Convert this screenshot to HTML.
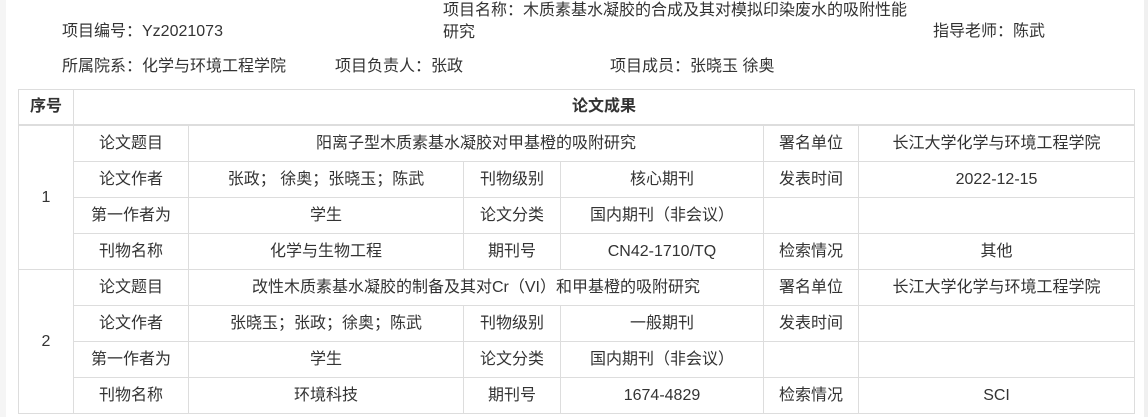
<!DOCTYPE html>
<html><head><meta charset="utf-8"><style>
html,body{margin:0;width:1148px;height:417px;overflow:hidden}
body{background:#fff;font-family:"Liberation Sans","Noto Sans CJK SC",sans-serif;font-size:16px;color:#333;position:relative}
.strip{position:absolute;left:0;top:0;width:6px;height:417px;background:#f5f5f5}
.rs{position:absolute;left:1144px;top:0;width:4px;height:417px;background:#f0f0f0}
.t{position:absolute;white-space:nowrap;line-height:22px}
table{position:absolute;left:18px;top:89px;border-collapse:collapse;table-layout:fixed;width:1116px}
td{border:1px solid #ddd;text-align:center;height:35px;padding:0;line-height:20px;white-space:nowrap}
tr.h td{height:34px;font-weight:bold;font-size:16px;border-bottom:2px solid #ddd}
</style></head><body>
<div class="strip"></div><div class="rs"></div>
<div class="t" style="left:62px;top:21px">项目编号：Yz2021073</div>
<div class="t" style="left:443px;top:0px">项目名称：木质素基水凝胶的合成及其对模拟印染废水的吸附性能<br>研究</div>
<div class="t" style="left:933px;top:21px">指导老师：陈武</div>
<div class="t" style="left:62px;top:56px">所属院系：化学与环境工程学院</div>
<div class="t" style="left:335px;top:56px">项目负责人：张政</div>
<div class="t" style="left:610px;top:56px">项目成员：张晓玉 徐奥</div>
<table>
<colgroup><col style="width:55px"><col style="width:115px"><col style="width:275px"><col style="width:97px"><col style="width:203px"><col style="width:95px"><col style="width:276px"></colgroup>
<tr class="h"><td>序号</td><td colspan="6">论文成果</td></tr>
<tr><td rowspan="4">1</td><td>论文题目</td><td colspan="3">阳离子型木质素基水凝胶对甲基橙的吸附研究</td><td>署名单位</td><td>长江大学化学与环境工程学院</td></tr>
<tr><td>论文作者</td><td>张政； 徐奥；张晓玉；陈武</td><td>刊物级别</td><td>核心期刊</td><td>发表时间</td><td>2022-12-15</td></tr>
<tr><td>第一作者为</td><td>学生</td><td>论文分类</td><td>国内期刊（非会议）</td><td></td><td></td></tr>
<tr><td>刊物名称</td><td>化学与生物工程</td><td>期刊号</td><td>CN42-1710/TQ</td><td>检索情况</td><td>其他</td></tr>
<tr><td rowspan="4">2</td><td>论文题目</td><td colspan="3">改性木质素基水凝胶的制备及其对Cr（VI）和甲基橙的吸附研究</td><td>署名单位</td><td>长江大学化学与环境工程学院</td></tr>
<tr><td>论文作者</td><td>张晓玉；张政；徐奥；陈武</td><td>刊物级别</td><td>一般期刊</td><td>发表时间</td><td></td></tr>
<tr><td>第一作者为</td><td>学生</td><td>论文分类</td><td>国内期刊（非会议）</td><td></td><td></td></tr>
<tr><td>刊物名称</td><td>环境科技</td><td>期刊号</td><td>1674-4829</td><td>检索情况</td><td>SCI</td></tr>
</table>
</body></html>
